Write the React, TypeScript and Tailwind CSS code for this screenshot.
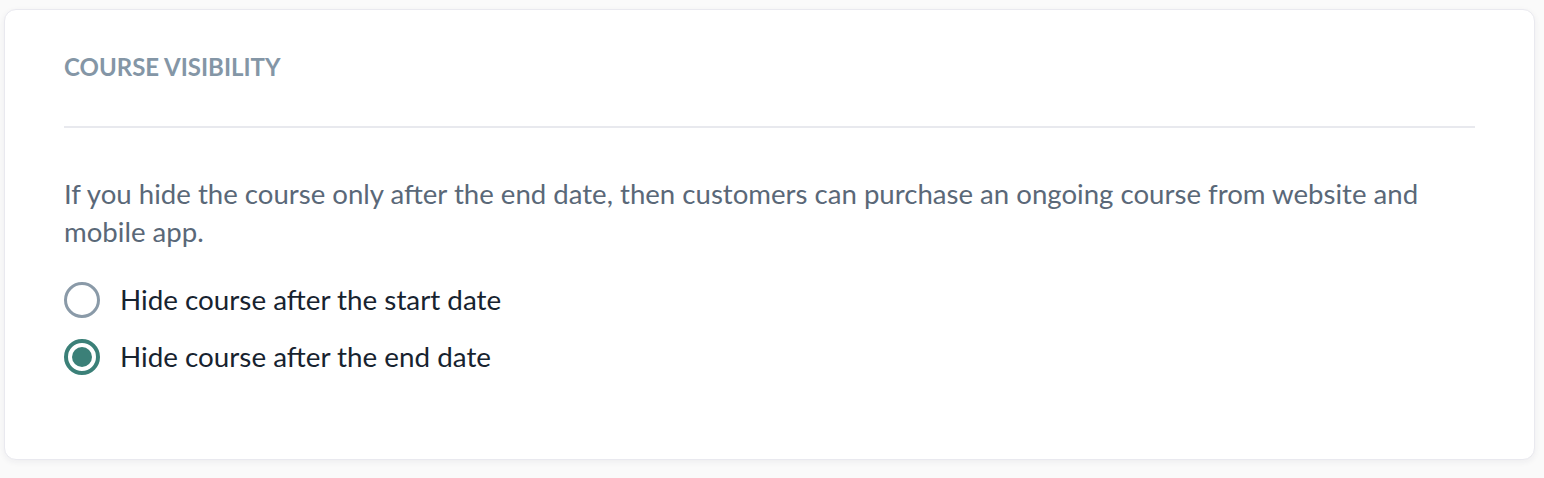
import { useState } from 'react'

const options = [
  { id: 'start', label: 'Hide course after the start date' },
  { id: 'end', label: 'Hide course after the end date' },
]

export default function App() {
  const [selected, setSelected] = useState('end')

  return (
    <div className="min-h-screen bg-[#fafafa] pt-[9px] pl-[4px] pr-[9px] font-['Lato','Noto_Sans',sans-serif]">
      <div className="h-[451px] rounded-[12px] border border-[#e9e9ef] bg-white px-[59px] pt-[42px] shadow-[0_2px_6px_rgba(30,30,60,0.06)]">
        {/* Encabezado */}
        <h2 className="text-[24px] leading-[30px] font-bold uppercase text-[#8496a6]">
          Course visibility
        </h2>
        <div className="mt-[44px] h-[2px] bg-[#e8e9ee]" />

        {/* Contenido */}
        <p className="mt-[47px] text-[27.6px] leading-[38px] text-[#5a6878]">
          If you hide the course only after the end date, then customers can purchase an ongoing course from website and mobile app.
        </p>

        <div className="mt-[31px] flex flex-col gap-[21px]">
          {options.map(opt => {
            const checked = selected === opt.id
            return (
              <label key={opt.id} className="flex cursor-pointer items-center gap-[20px]">
                <input
                  type="radio"
                  name="visibility"
                  className="sr-only"
                  checked={checked}
                  onChange={() => setSelected(opt.id)}
                />
                <span
                  className={
                    checked
                      ? 'flex h-[36px] w-[36px] shrink-0 items-center justify-center rounded-full border-[4px] border-[#3b8078]'
                      : 'flex h-[36px] w-[36px] shrink-0 items-center justify-center rounded-full border-[3px] border-[#8a9aa8]'
                  }
                >
                  {checked && <span className="h-[20px] w-[20px] rounded-full bg-[#3b8078]" />}
                </span>
                <span className="text-[27.8px] leading-[36px] text-[#17232f]">{opt.label}</span>
              </label>
            )
          })}
        </div>
      </div>
    </div>
  )
}
